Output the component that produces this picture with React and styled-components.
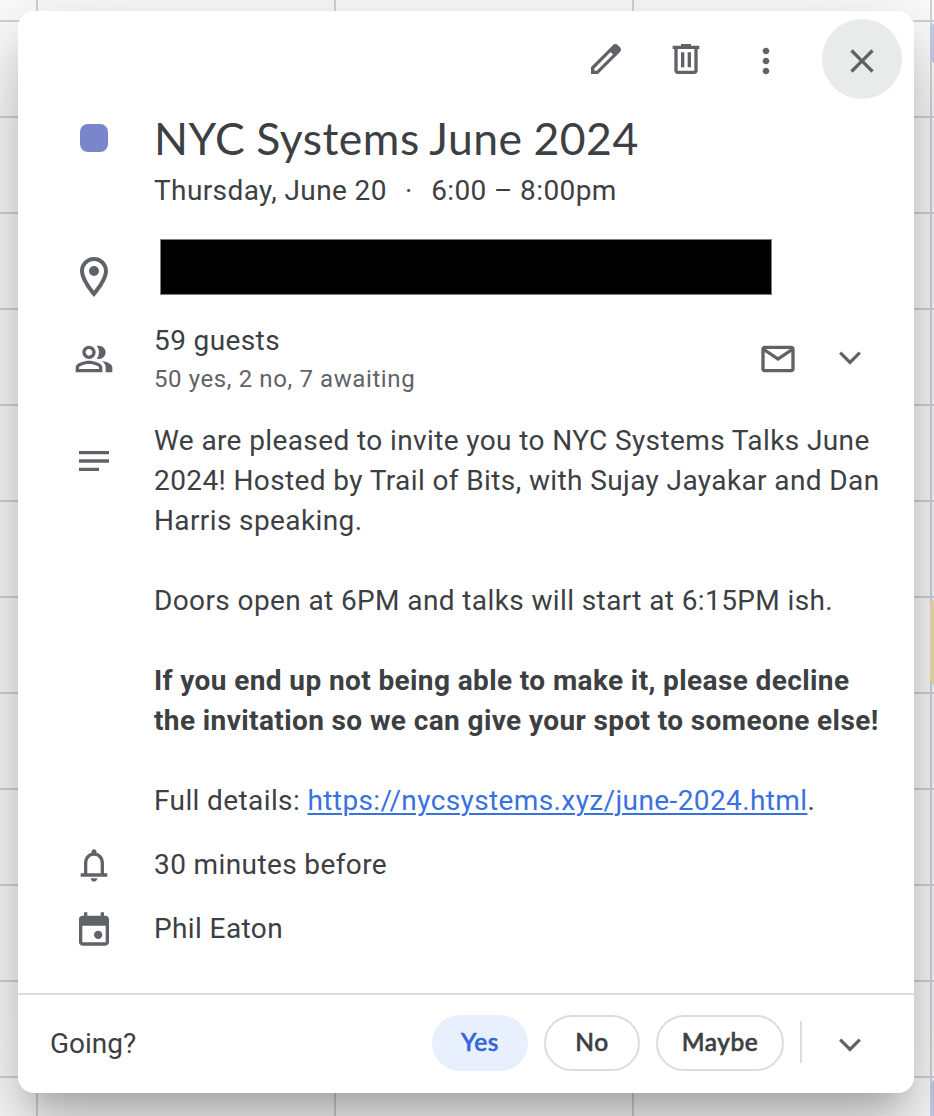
import React from 'react';
import styled, { createGlobalStyle } from 'styled-components';

const GlobalStyle = createGlobalStyle`
  * { box-sizing: border-box; }
  html, body { margin: 0; height: 1116px; overflow: hidden; background: #fff; }
  body { font-family: Roboto, "Liberation Sans", sans-serif; color: #3c4043; }
`;

const CalendarGrid = styled.main`
  position: relative;
  width: 934px;
  height: 1116px;
  padding: 11px 20px 23px 18px;
  overflow: hidden;
  background-color: #fff;
  background-image:
    linear-gradient(#d5d6dd 2px, transparent 2px),
    linear-gradient(90deg, #d5d6dd 2px, transparent 2px);
  background-size: 100% 96px, 298px 100%;
  background-position: 0 20px, 36px 0;
`;

const EventChip = styled.div`
  position: absolute;
  left: 930px;
  top: ${(p) => p.$top}px;
  width: 60px;
  height: ${(p) => p.$height}px;
  border-radius: 8px;
  background: ${(p) => p.$color};
`;

const Dialog = styled.section`
  position: relative;
  display: flex;
  flex-direction: column;
  height: 1082px;
  border-radius: 16px;
  background: #fff;
  box-shadow:
    0 48px 76px 6px rgba(0, 0, 0, 0.14),
    0 18px 92px 16px rgba(0, 0, 0, 0.12),
    0 22px 30px -14px rgba(0, 0, 0, 0.2);
`;

const Toolbar = styled.header`
  display: flex;
  justify-content: flex-end;
  height: 88px;
  padding: 8px 12px 0 0;
`;

const IconButton = styled.button`
  display: flex;
  align-items: center;
  justify-content: center;
  width: 80px;
  height: 80px;
  padding: ${(p) => (p.$low ? '4px 0 0' : '0')};
  border: 0;
  border-radius: 50%;
  color: #5f6368;
  background: ${(p) => (p.$filled ? '#e9ebea' : 'transparent')};
  margin-left: ${(p) => (p.$filled ? '16px' : '0')};
`;

const Svg = styled.svg`
  display: block;
  flex: none;
  fill: currentColor;
`;

const Row = styled.div`
  display: grid;
  grid-template-columns: 136px 1fr;
  margin-top: ${(p) => p.$gap || 0}px;
  height: ${(p) => p.$height}px;
`;

const IconCell = styled.div`
  display: flex;
  justify-content: center;
  align-items: flex-start;
  padding: ${(p) => p.$top || 0}px 0 0 16px;
  color: #5f6368;
`;

const ColorSwatch = styled.div`
  width: 28px;
  height: 28px;
  border-radius: 8px;
  background: #7986cb;
`;

const Title = styled.h1`
  margin: -1px 0 0;
  font: 400 44.5px/56px Lato, "Open Sans", sans-serif;
  letter-spacing: 0.5px;
  word-spacing: -1px;
  white-space: nowrap;
`;

const Text = styled.div`
  padding-top: 1px;
  font-size: 28px;
  line-height: 40px;
  letter-spacing: 0.39px;
  white-space: nowrap;
`;

const When = styled(Text)`
  margin-top: 4px;
`;

const Dot = styled.span`
  margin: 0 18.3px;
`;

const SubText = styled.div`
  margin-top: 2px;
  font-size: 24px;
  line-height: 32px;
  letter-spacing: 0.6px;
  color: #5f6368;
`;

const Redaction = styled.div`
  width: 612px;
  height: 56px;
  margin-left: 6px;
  border: 1px solid #7f7f7f;
  background: #000;
`;

const GuestContent = styled.div`
  display: flex;
  justify-content: space-between;
`;

const GuestActions = styled.div`
  display: flex;
  align-items: center;
  gap: 32px;
  padding: 2px 44px 0 0;
  color: #5f6368;
`;

const Link = styled.a`
  color: #3872e0;
  text-decoration: underline;
  text-decoration-thickness: 2px;
  text-underline-offset: 3px;
`;

const Footer = styled.footer`
  display: flex;
  align-items: center;
  height: 100px;
  margin-top: auto;
  padding: 0 44px 2px 32px;
  border-top: 2px solid #dadce0;
`;

const Going = styled(Text)`
  flex: 1;
  letter-spacing: 0;
`;

const Answer = styled.button`
  width: ${(p) => p.$width}px;
  height: 56px;
  margin-left: 16px;
  padding: 0;
  border: 2px solid ${(p) => (p.$selected ? '#e8f0fe' : '#dadce0')};
  border-radius: 28px;
  background: ${(p) => (p.$selected ? '#e8f0fe' : '#fff')};
  color: ${(p) => (p.$selected ? '#3367d6' : '#3c4043')};
  font: 500 24.5px/48px Lato, Roboto, sans-serif;
  letter-spacing: 0.5px;
  padding-bottom: 3px;
  -webkit-text-stroke: 0.6px currentColor;
`;

const Divider = styled.div`
  width: 2px;
  height: 42px;
  margin: 0 28px 2px 16px;
  background: #dadce0;
`;

const ChevronBox = styled.div`
  padding-top: 6px;
  color: #5f6368;
`;

const paths = {
  edit: 'M20.41 4.94l-1.35-1.35c-.78-.78-2.05-.78-2.83 0L3 16.82V21h4.18L20.41 7.77c.79-.78.79-2.05 0-2.83zm-14 14.12L5 19v-1.36l9.82-9.82 1.41 1.41-9.82 9.83z',
  trash: 'M15 4V3H9v1H4v2h1v13c0 1.1.9 2 2 2h10c1.1 0 2-.9 2-2V6h1V4h-5zm2 15H7V6h10v13zM9 8h2v9H9zm4 0h2v9h-2z',
  more: 'M12 8c1.1 0 2-.9 2-2s-.9-2-2-2-2 .9-2 2 .9 2 2 2zm0 2c-1.1 0-2 .9-2 2s.9 2 2 2 2-.9 2-2-.9-2-2-2zm0 6c-1.1 0-2 .9-2 2s.9 2 2 2 2-.9 2-2-.9-2-2-2z',
  close: 'M19 6.41L17.59 5 12 10.59 6.41 5 5 6.41 10.59 12 5 17.59 6.41 19 12 13.41 17.59 19 19 17.59 13.41 12z',
  place: 'M12 2C8.13 2 5 5.13 5 9c0 5.25 7 13 7 13s7-7.75 7-13c0-3.87-3.13-7-7-7zM7 9c0-2.76 2.24-5 5-5s5 2.24 5 5c0 2.88-2.88 7.19-5 9.88C9.92 16.21 7 11.85 7 9zM12 6.5a2.5 2.5 0 1 0 0 5a2.5 2.5 0 1 0 0-5z',
  people: 'M15 8c0-1.42-.5-2.73-1.33-3.76.42-.14.86-.24 1.33-.24 2.21 0 4 1.79 4 4s-1.79 4-4 4c-.43 0-.84-.09-1.23-.21-.03-.01-.06-.02-.1-.03A5.98 5.98 0 0 0 15 8zm1.66 5.13C18.03 14.06 19 15.32 19 17v3h4v-3c0-2.18-3.58-3.47-6.34-3.87zM9 4c2.21 0 4 1.79 4 4s-1.79 4-4 4-4-1.79-4-4 1.79-4 4-4zm0 2c-1.1 0-2 .9-2 2s.9 2 2 2 2-.9 2-2-.9-2-2-2zm0 7c2.67 0 8 1.34 8 4v3H1v-3c0-2.66 5.33-4 8-4zm6 5v-.99c-.2-.72-3.3-2.01-6-2.01s-5.8 1.29-6 2v1h12z',
  notes: 'M3 6h18v2H3zM3 11h18v2H3zM3 16h12v2H3z',
  mail: 'M20 4H4c-1.1 0-2 .9-2 2v12c0 1.1.9 2 2 2h16c1.1 0 2-.9 2-2V6c0-1.1-.9-2-2-2zm-.8 2L12 10.8 4.8 6h14.4zM4 18V7.87l8 5.33 8-5.33V18H4z',
  bell: 'M18 17v-6c0-3.07-1.63-5.64-4.5-6.32V4c0-.83-.67-1.5-1.5-1.5s-1.5.67-1.5 1.5v.68C7.64 5.36 6 7.92 6 11v6H4v2h16v-2h-2zm-2 0H8v-6c0-2.48 1.51-4.5 4-4.5s4 2.02 4 4.5v6zm-4 5c1.1 0 2-.9 2-2h-4c0 1.1.9 2 2 2z',
  calendar: 'M19 4h-1V2h-2v2H8V2H6v2H5C3.89 4 3 4.9 3 6v14c0 1.1.89 2 2 2h14c1.1 0 2-.9 2-2V6c0-1.1-.9-2-2-2zm0 16H5V10h14v10zM14.5 13a2.5 2.5 0 1 0 0 5a2.5 2.5 0 1 0 0-5z',
};

function Icon({ name, size = 40 }) {
  return (
    <Svg width={size} height={size} viewBox="0 0 24 24" aria-hidden="true">
      <path d={paths[name]} />
    </Svg>
  );
}

function Chevron() {
  return (
    <Svg width="40" height="40" viewBox="0 0 40 40" aria-hidden="true">
      <path d="M10.2 13.6L20 23.4L29.8 13.6" fill="none" stroke="currentColor" strokeWidth="3.2" />
    </Svg>
  );
}

export default function App() {
  return (
    <>
      <GlobalStyle />
      <CalendarGrid>
        <EventChip $top={22} $height={42} $color="#c9cfee" />
        <EventChip $top={598} $height={88} $color="#f6e3b0" />
        <EventChip $top={1079} $height={60} $color="#c9cfee" />
        <Dialog>
          <Toolbar>
            <IconButton aria-label="Edit event"><Icon name="edit" /></IconButton>
            <IconButton aria-label="Delete event"><Icon name="trash" /></IconButton>
            <IconButton aria-label="Options" $low><Icon name="more" /></IconButton>
            <IconButton aria-label="Close" $filled $low><Icon name="close" /></IconButton>
          </Toolbar>

          <Row $gap={12} $height={99}>
            <IconCell $top={13}><ColorSwatch /></IconCell>
            <div>
              <Title>NYC Systems June 2024</Title>
              <When>Thursday, June 20<Dot>·</Dot>6:00 – 8:00pm</When>
            </div>
          </Row>

          <Row $gap={29} $height={81}>
            <IconCell $top={13.5}><Icon name="place" size={48} /></IconCell>
            <Redaction />
          </Row>

          <Row $height={76}>
            <IconCell $top={18.7}><Icon name="people" /></IconCell>
            <GuestContent>
              <div>
                <Text>59 guests</Text>
                <SubText>50 yes, 2 no, 7 awaiting</SubText>
              </div>
              <GuestActions>
                <Icon name="mail" />
                <Chevron />
              </GuestActions>
            </GuestContent>
          </Row>

          <Row $gap={24} $height={400}>
            <IconCell $top={20.7}><Icon name="notes" /></IconCell>
            <Text>
              We are pleased to invite you to NYC Systems Talks June<br />
              2024! Hosted by Trail of Bits, with Sujay Jayakar and Dan<br />
              Harris speaking.<br />
              <br />
              Doors open at 6PM and talks will start at 6:15PM ish.<br />
              <br />
              <b>If you end up not being able to make it, please decline<br />
              the invitation so we can give your spot to someone else!</b><br />
              <br />
              Full details: <Link>https://nycsystems.xyz/june-2024.html</Link>.
            </Text>
          </Row>

          <Row $gap={24} $height={40}>
            <IconCell $top={0.8}><Icon name="bell" /></IconCell>
            <Text>30 minutes before</Text>
          </Row>

          <Row $gap={24} $height={40}>
            <IconCell $top={0.7}><Icon name="calendar" /></IconCell>
            <Text>Phil Eaton</Text>
          </Row>

          <Footer>
            <Going>Going?</Going>
            <Answer $width={96} $selected>Yes</Answer>
            <Answer $width={96}>No</Answer>
            <Answer $width={128}>Maybe</Answer>
            <Divider />
            <ChevronBox><Chevron /></ChevronBox>
          </Footer>
        </Dialog>
      </CalendarGrid>
    </>
  );
}
